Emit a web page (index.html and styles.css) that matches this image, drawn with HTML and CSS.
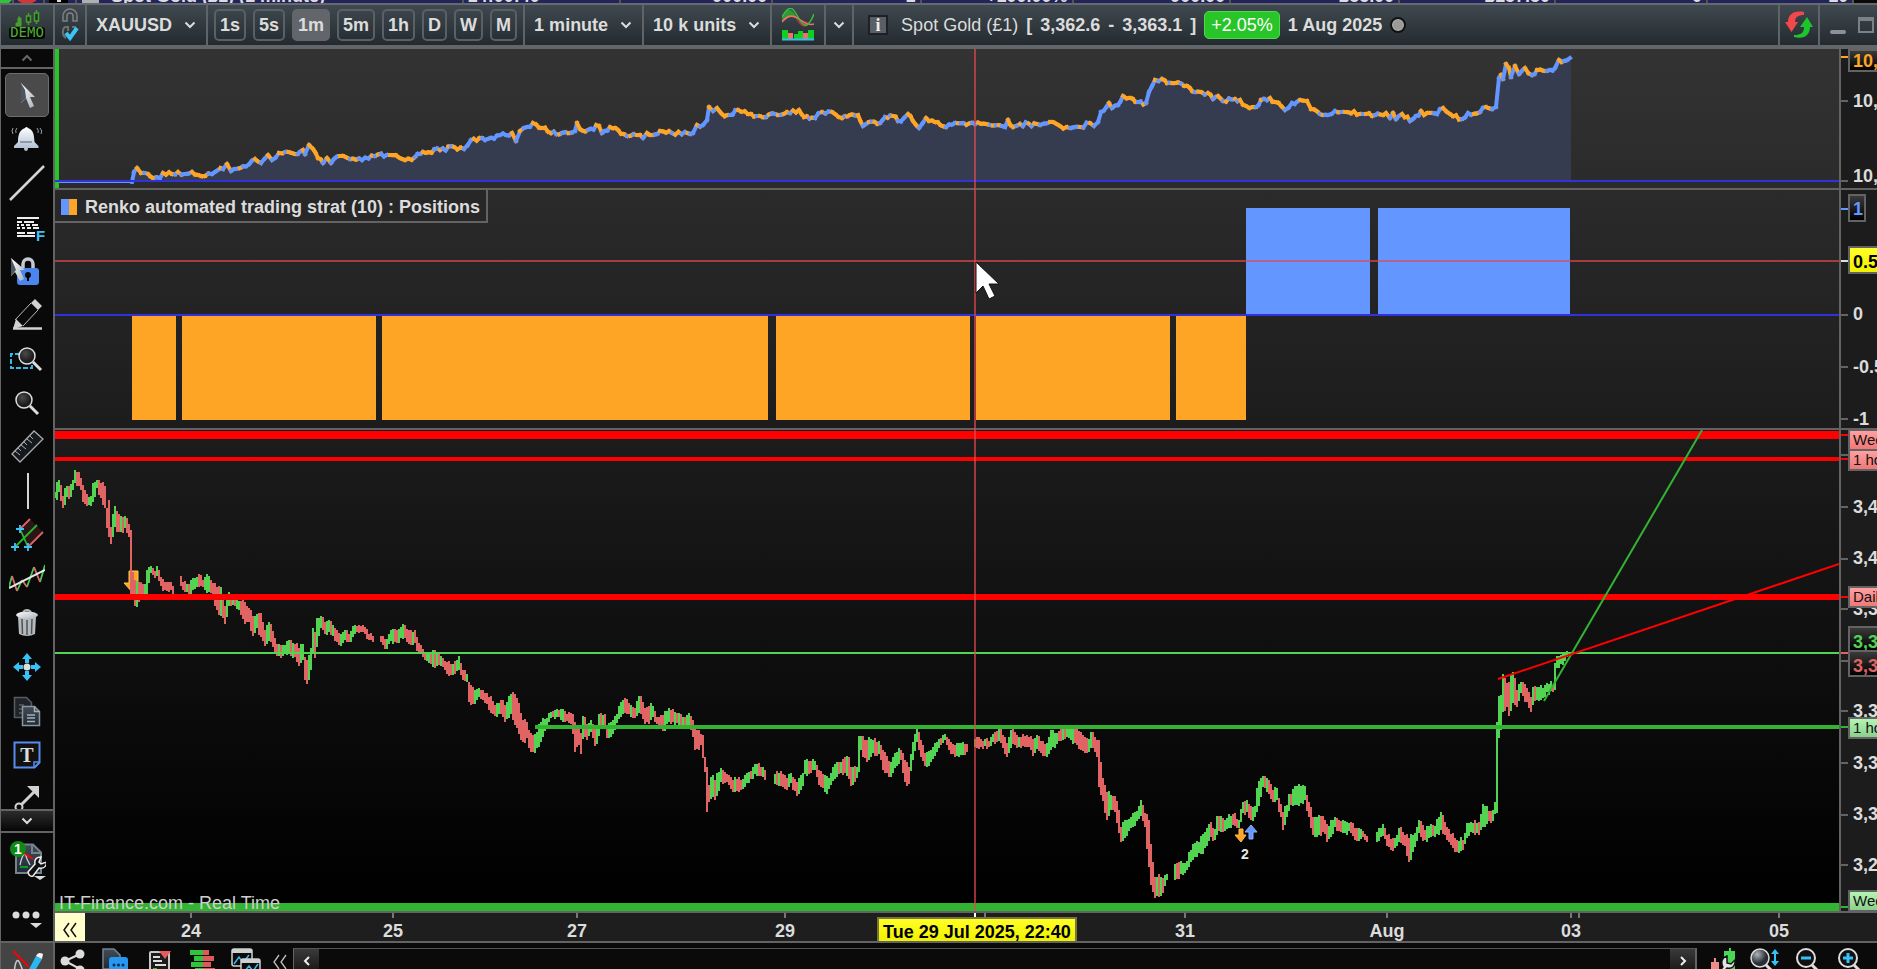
FILE: index.html
```html
<!DOCTYPE html>
<html lang="en">
<head>
    <meta charset="UTF-8">
    <meta name="viewport" content="width=device-width, initial-scale=1.0">
    <title>XAUUSD - 1 minute</title>
    <link rel="stylesheet" href="styles.css">
</head>
<body>
    <svg class="defs" width="0" height="0" aria-hidden="true">
        <defs>
            <linearGradient id="silver" x1="0" y1="0" x2="1" y2="1"><stop offset="0" stop-color="#fff"/><stop offset="1" stop-color="#a9b2bd"/></linearGradient>
            <linearGradient id="bellFill" x1="0" y1="0" x2="0" y2="1"><stop offset="0" stop-color="#fff"/><stop offset="1" stop-color="#a8bad0"/></linearGradient>
            <linearGradient id="slate" x1="0" y1="0" x2="0" y2="1"><stop offset="0" stop-color="#414c58"/><stop offset="1" stop-color="#202a34"/></linearGradient>
            <radialGradient id="lens" cx=".4" cy=".35"><stop offset="0" stop-color="#4a4a4a"/><stop offset="1" stop-color="#1c1c1c"/></radialGradient>
            <radialGradient id="ball" cx=".35" cy=".3"><stop offset="0" stop-color="#aeb4bb"/><stop offset="1" stop-color="#272d33"/></radialGradient>
        </defs>
    </svg>

    <div class="orders">
        <span class="order name">
            <svg width="107" height="3" viewBox="0 0 107 3"><path d="M0 0h12l-3 3H0z" fill="#2fc53a"/><path d="M18 0h18v1l-4 2H22l-4-2z" fill="#d83438"/><path d="M49 0h19v3H49z" fill="#000"/><path d="M57 0h4v2h-4z" fill="#ddd"/><path d="M82 0h17v3H82z" fill="#aab0b6"/><path d="M12 0h2v3h-2zM43 0h2v3h-2zM75 0h2v3h-2z" fill="#55554c"/></svg>
            Spot Gold (£1) (1 minute)
        </span>
        <span class="order time">14:00:40</span>
        <span class="order c1">900.00</span>
        <span class="order c2">1</span>
        <span class="order c3">+100.00%</span>
        <span class="order c4">900.00</span>
        <span class="order c5">£55.00</span>
        <span class="order c6">£157.50</span>
        <span class="order c7">0</span>
        <span class="order c8">10</span>
        <span class="orders-end"></span>
    </div>

    <header class="toolbar">
        <div class="seg demo">
            <svg width="40" height="32" viewBox="0 0 40 32">
                <g stroke="#46a02c" fill="#46a02c" stroke-width="1">
                    <path d="M12 7v10M11 9h3v6h-3z"/>
                    <path d="M9 14h5v3H9z"/>
                    <path d="M21.500 4v12M29.500 1v14" stroke-width="1.500"/>
                    <path d="M19.500 7h4v6h-4zM27.500 4h4v8h-4z" fill="#1d3320" stroke-width="1.500"/>
                </g>
                <rect x="2" y="18" width="36" height="12" rx="3" fill="#050505"/>
                <text x="20" y="28" class="demo-text" text-anchor="middle">DEMO</text>
            </svg>
        </div>
        <button class="seg link" aria-label="Link windows">
            <svg width="20" height="34" viewBox="0 0 20 34" fill="none">
                <path d="M6 13H3V8a7 7 0 0 1 14 0v5h-4V8a3 3 0 0 0-6 0v5z" fill="#3c4347" stroke="#7c8184" stroke-width="1.500"/>
                <path d="M6 30c-4-2-4-9-1-11h3v4M12 19h3v4" stroke="#6b7073" stroke-width="2"/>
                <path d="M6 25l4 5 7-10" stroke="#3cc4f8" stroke-width="4"/>
            </svg>
        </button>
        <label class="seg pick">
            <select aria-label="Instrument"><option>XAUUSD</option></select>
            <svg class="chev" viewBox="0 0 12 8"><path d="M1.500 1.500L6 6l4.500-4.500"/></svg>
        </label>
        <div class="seg frames">
            <button>1s</button>
            <button>5s</button>
            <button class="active">1m</button>
            <button>5m</button>
            <button>1h</button>
            <button>D</button>
            <button>W</button>
            <button>M</button>
        </div>
        <label class="seg pick">
            <select aria-label="Timeframe"><option>1 minute</option></select>
            <svg class="chev" viewBox="0 0 12 8"><path d="M1.500 1.500L6 6l4.500-4.500"/></svg>
        </label>
        <label class="seg pick">
            <select aria-label="History"><option>10 k units</option></select>
            <svg class="chev" viewBox="0 0 12 8"><path d="M1.500 1.500L6 6l4.500-4.500"/></svg>
        </label>
        <button class="seg indicators" aria-label="Indicators">
            <svg width="32" height="34" viewBox="0 0 32 34">
                <path d="M0 10C5-2 9 0 14 8Q4 7 0 14z" fill="#2f9a35"/>
                <path d="M13 9q7 3 15 6-7 10-15-6z" fill="#a5393c"/>
                <path d="M0 14Q8 4 17 11t15 5" fill="none" stroke="#f0706c" stroke-width="1.500"/>
                <path d="M0 9C8-5 11 0 16 9s9 14 16-3" fill="none" stroke="#38c03c" stroke-width="1.500"/>
                <path d="M0 22h6v9H0zM12 26h4v5h-4zM16 23h5v8h-5zM26 22h6v9h-6z" fill="#0fd01e"/>
                <path d="M6 25h5v6H6zM21 25h5v6h-5z" fill="#f0706c"/>
                <path d="M0 31.500h32" stroke="#35bdf0" stroke-width="2"/>
            </svg>
        </button>
        <button class="seg more" aria-label="More indicators">
            <svg class="chev" viewBox="0 0 12 8"><path d="M1.500 1.500L6 6l4.500-4.500"/></svg>
        </button>
        <div class="quote">
            <span class="info">i</span>
            <span>Spot Gold (£1)</span>
            <strong class="prices"><span>[</span><span>3,362.6</span><span>-</span><span>3,363.1</span><span>]</span></strong>
            <span class="change">+2.05%</span>
            <strong>1 Aug 2025</strong>
            <span class="dot"></span>
        </div>
        <button class="seg swap" aria-label="Refresh">
            <svg width="28" height="28" viewBox="0 0 28 28">
                <path d="M19 1C8-1 3 4 3 11H0l6.500 10L13 11h-3c0-5 3-7 9-7z" fill="#f2484c"/>
                <path d="M9 26c11 3 16-3 16-10h3L22 6l-7 10h4c0 6-3 8-10 8z" fill="#1cc52c"/>
            </svg>
        </button>
        <div class="window">
            <button aria-label="Minimise"><i class="min"></i></button>
            <button aria-label="Maximise"><i class="max"></i></button>
        </div>
    </header>

    <main class="workspace">
        <nav class="sidebar" aria-label="Drawing tools">
            <button class="scroll up" aria-label="Scroll up"><svg class="chev" viewBox="0 0 12 8"><path d="M1.500 6.500L6 2l4.500 4.500"/></svg></button>
            <div class="tools">
                <button class="tool active" aria-label="Pointer"><svg viewBox="0 0 36 36"><path d="M12 6v20l5-5 4 10 4-2-4-9h5z" fill="url(#silver)"/><path d="M12 6v20l5-5-1-8z" fill="#4a5560"/></svg></button>
                <button class="tool" aria-label="Alerts"><svg viewBox="0 0 36 36"><path d="M16 7q1.500-2 3 0c6 2 6 8 6.500 14l4 4v2H5v-2l4-4c0-6 1-12 7-14zM15 27h4q0 3-2 3t-2-3z" fill="url(#bellFill)"/><path d="M11 21h12" stroke="#55606e"/><path d="M4 7q-2 3 0 6M8 7q-2 2-1 5M28 7q2 2 1 5M31 7q3 3 1 6" fill="none" stroke="#93a0ac"/></svg></button>
                <button class="tool" aria-label="Line"><svg viewBox="0 0 36 36"><path d="M1 35L35 1" stroke="#d5d5d5" stroke-width="2.500"/></svg></button>
                <button class="tool" aria-label="Fibonacci"><svg viewBox="0 0 36 36"><path d="M8 9h22M8 13h5m2 0h10M8 16h2m2 0h3m2 0h4m2 0h6M8 19h3m2 0h3m2 0h4m2 0h6M8 24h8m2 0h8M8 27h18" stroke="#eee" stroke-width="1.800"/><text x="27" y="32" class="fib">F</text></svg></button>
                <button class="tool" aria-label="Lock"><svg viewBox="0 0 36 36"><path d="M14 17v-6a5 5 0 0 1 10 0v6" fill="none" stroke="#c6cad0" stroke-width="3.500"/><rect x="8" y="15" width="22" height="17" rx="3" fill="#4a86ee"/><circle cx="19" cy="22" r="3" fill="#0a0a0a"/><path d="M18 23h2v5h-2z"/><path d="M2 5v18l4-4 5 9 4-2-4-9h5z" fill="url(#silver)"/><path d="M2 5v18l5-6z" fill="#4a5560"/></svg></button>
                <button class="tool" aria-label="Draw"><svg viewBox="0 0 36 36"><path d="M26 2l7 7-4 4-7-7zM4 32l3-10 7 7z" fill="#d2d2d2"/><path d="M22 6L6 23M29 13L14 29" stroke="#bbb"/><path d="M4 31.500h29" stroke="#d2d2d2" stroke-width="2.500"/></svg></button>
                <button class="tool" aria-label="Zoom selection"><svg viewBox="0 0 36 36"><path d="M11 13H2v14h21v-4" fill="none" stroke="#35b9ea" stroke-width="2" stroke-dasharray="5 2"/><circle cx="18" cy="15" r="8" fill="url(#lens)" stroke="#ddd" stroke-width="1.500"/><path d="M24 21l8 8" stroke="#ddd" stroke-width="3"/></svg></button>
                <button class="tool" aria-label="Zoom"><svg viewBox="0 0 36 36"><circle cx="15" cy="15" r="8" fill="url(#lens)" stroke="#ddd" stroke-width="1.500"/><path d="M21 21l8 8" stroke="#ddd" stroke-width="3"/></svg></button>
                <button class="tool" aria-label="Ruler"><svg viewBox="0 0 36 36"><path d="M3 25L25 2l9 8-23 23z" fill="#15181d" stroke="#aaa" stroke-width="1.300"/><path d="M6 22l5 4M9 19l3 3M12 16l5 4M15 13l3 3M18 10l5 4M21 7l3 3" stroke="#aaa"/></svg></button>
                <button class="tool" aria-label="Vertical line"><svg viewBox="0 0 36 36"><path d="M19 0v36" stroke="#d5d5d5" stroke-width="2"/></svg></button>
                <button class="tool" aria-label="Pitchfork"><svg viewBox="0 0 36 36"><path d="M11 12L21 2l13 13-15 15z" fill="#2a1517"/><path d="M11 12L21 2M19 30l15-15" stroke="#e06064" stroke-width="1.800"/><path d="M6 30L28 8M11 12l8 18" stroke="#28b42e" stroke-width="1.800"/><path d="M11 8v8M7 12h8M6 26v8M2 30h8M19 26v8M15 30h8" stroke="#3cc4f8" stroke-width="1.800"/></svg></button>
                <button class="tool" aria-label="Regression"><svg viewBox="0 0 36 36"><g fill="none" stroke-width="1.800"><path d="M0 26l3-11M8 30l5-11M18 26l7-20M31 21l5-17" stroke="#4cc652"/><path d="M3 15l5 15M13 19l5 7M25 6l6 15" stroke="#e06a6a"/><path d="M0 27L36 9" stroke="#e8e8e8" stroke-width="2"/></g></svg></button>
                <button class="tool" aria-label="Delete"><svg viewBox="0 0 36 36"><path d="M9 12h18l-1 17q-8 4-16 0z" fill="#b4b9be"/><ellipse cx="18" cy="10" rx="11" ry="3.500" fill="url(#silver)"/><path d="M14 7q4-4 8 0" fill="none" stroke="#bbb" stroke-width="2"/><path d="M13 14l.500 15M18 15v15M23 14l-.500 15" stroke="#4d5358" stroke-width="1.500"/></svg></button>
                <button class="tool" aria-label="Move"><svg viewBox="0 0 36 36" fill="#35c2f8"><path d="M18 4l5 6h-3v4h-4v-4h-3zM18 32l5-6h-3v-4h-4v4h-3zM4 18l6-5v3h4v4h-4v3zM32 18l-6-5v3h-4v4h4v3z"/><circle cx="18" cy="18" r="3.500" fill="#ddd"/></svg></button>
                <button class="tool" aria-label="Copy"><svg viewBox="0 0 36 36" stroke-width="1.500"><path d="M5.500 4.500h12l5 5v15h-17z" fill="#20252b" stroke="#565c62"/><path d="M10 12h5M10 16h4M10 20h4" stroke="#565c62"/><path d="M13.500 13.500h12l5 5v14h-17z" fill="url(#slate)" stroke="#8b959e"/><path d="M25.500 13.500v5h5M18 22h8M18 25h8M18 28.500h8" fill="none" stroke="#a5afb8"/></svg></button>
                <button class="tool" aria-label="Text"><svg viewBox="0 0 36 36"><path d="M5.500 5.500h25v20l-5 5h-20z" fill="#111" stroke="#5a8cf0" stroke-width="2"/><path d="M25 30.500V25h5.500" fill="none" stroke="#5a8cf0" stroke-width="1.500"/><text x="18" y="25" text-anchor="middle" class="serif-t">T</text></svg></button>
                <button class="tool" aria-label="Arrow"><svg viewBox="0 0 36 36"><path d="M12 24L26 10" stroke="#d2d2d2" stroke-width="3"/><path d="M18 5h12v12z" fill="#d2d2d2"/><circle cx="10" cy="26" r="3.500" fill="none" stroke="#d2d2d2" stroke-width="2"/></svg></button>
            </div>
            <button class="scroll down" aria-label="Scroll down"><svg class="chev" viewBox="0 0 12 8"><path d="M1.500 1.500L6 6l4.500-4.500"/></svg></button>
            <div class="extras">
                <button aria-label="Manage drawings"><svg width="38" height="42" viewBox="0 0 38 42">
                    <path d="M8 5.500h17l8 8V34H8z" fill="url(#slate)" stroke="#76828c" stroke-width="2"/>
                    <path d="M24 5v9h9" fill="none" stroke="#76828c" stroke-width="2"/>
                    <path d="M12 26q4-18 7-6l3 6" fill="none" stroke="#c8ccd0" stroke-width="1.300"/>
                    <path d="M16 14l9 6" stroke="#f00" stroke-width="2"/><path d="M12 28h8" stroke="#0a9a2c" stroke-width="2"/>
                    <path d="M20 33l7-8c-1-5 2-7 6-7l-2 5 2 2 6-2c-1 5-3 7-8 6l-6 8q-4 1-5-4z" fill="#111" stroke="#eee" stroke-width="1.500"/>
                    <path d="M26 37h12l-6 4z" fill="#ddd"/>
                    <circle cx="10" cy="10" r="8" fill="#0f8a14"/><text x="10" y="15" text-anchor="middle" class="count">1</text>
                </svg></button>
                <button aria-label="More tools"><svg width="38" height="22" viewBox="0 0 38 22" fill="#dcdcdc"><circle cx="8" cy="5" r="3.500"/><circle cx="18" cy="5" r="3.500"/><circle cx="28" cy="5" r="3.500"/><path d="M22 13h12l-6 5z"/></svg></button>
            </div>
        </nav>

        <section class="charts">
            <div class="panel equity">
                <svg class="plot" id="equity" viewBox="55 49 1784 139" preserveAspectRatio="none"></svg>
                <div class="scale" id="equityScale"></div>
            </div>
            <div class="panel positions">
                <svg class="plot" id="positions" viewBox="55 190 1784 238" preserveAspectRatio="none"></svg>
                <div class="scale" id="positionsScale"></div>
                <div class="legend"><i></i>Renko automated trading strat (10) : Positions</div>
            </div>
            <div class="panel price">
                <svg class="plot" id="price" viewBox="55 430 1784 481" preserveAspectRatio="none"></svg>
                <div class="scale" id="priceScale"></div>
                <span class="source">IT-Finance.com - Real Time</span>
            </div>
            <div class="times">
                <div class="time-scale" id="timeScale"></div>
                <button class="rewind" aria-label="Back"><svg width="16" height="16" viewBox="0 0 16 16"><path d="M7 1L2 8l5 7M14 1L9 8l5 7"/></svg></button>
                <span class="when">Tue 29 Jul 2025, 22:40</span>
            </div>
            <div class="cross"></div>
            <svg class="mouse" width="24" height="40" viewBox="0 0 24 40"><path d="M1 1v31l7-7 6 13 6-3-6-12h10z" fill="#fff" stroke="#111"/></svg>
        </section>
    </main>

    <footer class="bottom">
        <button class="pen" aria-label="Drawing mode"><svg width="34" height="26" viewBox="0 0 34 26"><path d="M4 26q2-22 7-8l3 8" fill="none" stroke="#c8ccd0" stroke-width="1.500"/><path d="M3 3l16 16" stroke="#f00" stroke-width="2"/><path d="M17 25L26 8l6 3-9 15h-7z" fill="#2ab8f0"/><path d="M26 8q2-5 7-2l-1 5z" fill="#f4f4f4"/></svg></button>
        <button class="share" aria-label="Share"><svg width="26" height="24" viewBox="0 0 26 24" fill="#dcdcdc"><path d="M5 13L20 6M5 13l15 8" stroke="#dcdcdc" stroke-width="2"/><circle cx="20" cy="6" r="4.500"/><circle cx="5" cy="13" r="4.500"/><circle cx="20" cy="22" r="4.500"/></svg></button>
        <button class="chat" aria-label="Chat"><svg width="28" height="24" viewBox="0 0 28 24"><path d="M2 1h11l6 6v14H2z" fill="url(#slate)" stroke="#76828c" stroke-width="1.500"/><rect x="8" y="9" width="19" height="20" rx="3" fill="#2698f4"/><g fill="#0c2c4c"><circle cx="13" cy="17" r="1.500"/><circle cx="17.500" cy="17" r="1.500"/><circle cx="22" cy="17" r="1.500"/></g></svg></button>
        <button aria-label="Reports"><svg width="24" height="24" viewBox="0 0 24 24"><path d="M2 26V5q0-1 1-1h18v22" fill="#1c1c1c" stroke="#c8c8c8" stroke-width="2"/><path d="M11 3h12l-6 8z" fill="#e85a5e"/><path d="M5 9h7M5 13h9M7 17h11" stroke="#ddd" stroke-width="2"/><path d="M5 21h4" stroke="#0fd01e" stroke-width="2"/></svg></button>
        <button class="book" aria-label="Order book"><svg width="28" height="24" viewBox="0 0 28 24"><path d="M1 2h13v5H1zM5 8h9v5H5zM2 14h12v5H2zM6 20h8v5H6z" fill="#2fc53a"/><path d="M14 2h6v5h-6zM14 8h11v5H14zM14 14h8v5h-8zM14 20h12v5H14z" fill="#e0585c"/></svg></button>
        <button aria-label="Windows"><svg width="32" height="24" viewBox="0 0 32 24"><g fill="#0a0a0a" stroke="#d0d0d0" stroke-width="1.500"><rect x="2" y="1" width="20" height="17" rx="2"/><path d="M2 3h20" stroke-width="4"/></g><path d="M4 16l5-7 4 6 6-8" fill="none" stroke="#35bdf0" stroke-width="1.500"/><rect x="11" y="11" width="19" height="18" rx="2" fill="#0a0a0a" stroke="#d0d0d0" stroke-width="1.500"/><path d="M11 13h19" stroke="#d0d0d0" stroke-width="4"/><path d="M14 24l5-6 4 5 5-7" fill="none" stroke="#35bdf0" stroke-width="1.500"/></svg></button>
        <button class="back" aria-label="Collapse"><svg width="16" height="16" viewBox="0 0 16 16"><path d="M7 1L2 8l5 7M14 1L9 8l5 7" fill="none" stroke="#c0c0c0" stroke-width="1.300"/></svg></button>
        <div class="scrollbar">
            <button aria-label="Scroll left"><svg width="8" height="12" viewBox="0 0 8 12"><path d="M6 2L2 6l4 4"/></svg></button>
            <button aria-label="Scroll right"><svg width="8" height="12" viewBox="0 0 8 12"><path d="M2 2l4 4-4 4"/></svg></button>
        </div>
        <div class="zooms">
            <button aria-label="Chart settings"><svg width="28" height="24" viewBox="0 0 28 24"><path d="M2 14h8v12H2zM5 10h2v4H5z" fill="#f08a8a"/><path d="M15 3h11v20H15zM20 0h2v4h-2z" fill="#4cd655"/><path d="M7 27l7-8c-3-6 0-10 4-11v7l4 1 4-4c1 7-4 9-8 8l-7 8" fill="#e4e4e4" stroke="#111" stroke-width="1.500"/></svg></button>
            <button aria-label="Fit height"><svg width="32" height="24" viewBox="0 0 32 24"><circle cx="11" cy="10" r="9" fill="url(#ball)" stroke="#ddd" stroke-width="1.500"/><path d="M17 17l7 7" stroke="#ddd" stroke-width="3"/><path d="M26 1l4 5h-3v7h3l-4 5-4-5h3V6h-3z" fill="#35c2f8"/></svg></button>
            <button aria-label="Zoom out"><svg width="24" height="24" viewBox="0 0 24 24"><circle cx="11" cy="10" r="9" fill="#111" stroke="#ddd" stroke-width="2"/><path d="M17 17l7 7" stroke="#ddd" stroke-width="3"/><path d="M6 10h10" stroke="#35c2f8" stroke-width="3"/></svg></button>
            <button aria-label="Zoom in"><svg width="24" height="24" viewBox="0 0 24 24"><circle cx="11" cy="10" r="9" fill="#111" stroke="#ddd" stroke-width="2"/><path d="M17 17l7 7" stroke="#ddd" stroke-width="3"/><path d="M6 10h10M11 5v10" stroke="#35c2f8" stroke-width="3"/></svg></button>
        </div>
    </footer>

    <script src="script.js"></script>
</body>
</html>
```
FILE: styles.css
```css
* {
box-sizing: border-box;
}

body {
margin: 0;
height: 100vh;
display: flex;
flex-direction: column;
overflow: hidden;
background-color: #0a0a0a;
color: #dcdcdc;
font-family: "Liberation Sans", Arial, sans-serif;
font-size: 18px;
line-height: 20px;
}

button, select {
background: none;
border: none;
border-radius: 0;
color: inherit;
font: inherit;
margin: 0;
padding: 0;
cursor: pointer;
}

svg {
display: block;
flex: none;
}

.defs {
position: absolute;
}

.chev {
width: 12px;
height: 8px;
fill: none;
stroke: #dcdcdc;
stroke-width: 2;
}

/* orders list, only its last pixels show above the chart window */
.orders {
display: flex;
align-items: flex-end;
flex: none;
height: 3px;
overflow: hidden;
background-color: #24245c;
font-weight: bold;
line-height: 14px;
}

.order {
flex: none;
border-right: 2px solid #55554c;
padding: 0 4px;
text-align: right;
white-space: nowrap;
}

.name {
display: flex;
align-items: flex-end;
gap: 4px;
width: 24.7%;
padding-left: 0;
}

.time { width: 8.4%; text-align: left; }
.c1 { width: 8.1%; }
.c2 { width: 7.9%; }
.c3 { width: 8.1%; }
.c4 { width: 8.4%; }
.c5 { width: 9%; }
.c6 { width: 8.3%; }
.c7 { width: 8.1%; }
.c8 { width: 7.8%; }

.orders-end {
flex: 1;
height: 3px;
background-color: #0a0a0a;
}

.toolbar {
display: flex;
flex: none;
height: 46px;
border-top: 2px solid #666a6d;
border-bottom: 4px solid #636668;
border-left: 1px solid #666a6d;
background: linear-gradient(#40494f, #232b30);
}

.seg {
display: flex;
align-items: center;
justify-content: center;
flex: none;
border-right: 2px solid #5f6467;
}

.demo {
width: 54px;
}

.demo-text {
fill: #4fae30;
font-family: "DejaVu Sans Mono", monospace;
font-size: 14px;
}

.link {
width: 32px;
}

.pick {
gap: 11px;
padding: 0 10px 0 9px;
font-weight: bold;
}

.pick select {
appearance: none;
outline: none;
}

.frames {
gap: 7px;
padding: 0 6px;
font-weight: bold;
}

.frames button {
height: 32px;
border: 2px solid #596066;
border-radius: 5px;
padding: 0 4px;
}

.frames .active {
background-color: #62666a;
border-color: #62666a;
}

.indicators {
width: 54px;
}

.more {
width: 28px;
}

.quote {
display: flex;
align-items: center;
flex: 1;
gap: 8px;
padding-left: 14px;
white-space: nowrap;
}

.info {
width: 20px;
height: 20px;
margin-right: 5px;
border: 2px solid #1d2024;
background-color: #5a5e66;
color: #eee;
font-family: "Liberation Serif", serif;
font-weight: bold;
line-height: 16px;
text-align: center;
}

.prices {
display: flex;
gap: 8px;
}

.change {
padding: 3px 6px;
border: 1px solid #4fd84f;
border-radius: 5px;
background-color: #27c527;
color: #fff;
}

.dot {
width: 16px;
height: 16px;
border: 2px solid #111;
border-radius: 50%;
background-color: #9a9a9a;
box-shadow: inset 0 0 0 1px #b5b5b5;
}

.swap {
width: 42px;
border-left: 2px solid #5f6467;
}

.window {
display: flex;
flex: 0 0 57px;
align-items: center;
gap: 12px;
padding-left: 10px;
}

.window i {
display: block;
width: 16px;
}

.min {
height: 4px;
margin-top: 14px;
border-radius: 2px;
background-color: #8b9196;
}

.max {
height: 16px;
border: 2px solid #7b8186;
border-top-width: 4px;
}

.workspace {
display: flex;
flex: 1;
min-height: 0;
}

/* left tools */
.sidebar {
display: flex;
flex-direction: column;
flex: 0 0 55px;
border-left: 1px solid #666;
border-right: 2px solid #636363;
background-color: #090909;
}

.sidebar button {
display: flex;
align-items: center;
justify-content: center;
}

.scroll {
flex: none;
}

.up {
height: 20px;
border-bottom: 2px solid #636363;
}

.up .chev {
opacity: .45;
}

.down {
height: 24px;
border-top: 2px solid #636363;
border-bottom: 2px solid #636363;
background: linear-gradient(#2c2c2c, #050505);
}

.tools {
display: flex;
flex-direction: column;
align-items: center;
flex: 1;
min-height: 0;
overflow: hidden;
padding-top: 4px;
}

.tool {
flex: none;
width: 44px;
height: 44px;
}

.tool svg {
width: 36px;
height: 36px;
}

.sidebar .tool.active {
border: 1px solid #6e6e6e;
border-radius: 5px;
background-color: #4a4a4a;
}

.fib {
fill: #3cc4f8;
font-size: 15px;
font-weight: bold;
}

.serif-t {
fill: #dcdcdc;
font-family: "Liberation Serif", serif;
font-size: 20px;
font-weight: bold;
}

.count {
fill: #fff;
font-size: 14px;
font-weight: bold;
}

.extras {
display: flex;
flex-direction: column;
align-items: center;
flex: 0 0 108px;
gap: 29px;
padding-top: 6px;
}

/* charts */
.charts {
position: relative;
display: flex;
flex-direction: column;
flex: 1;
min-width: 0;
background: linear-gradient(#333, #000 95%);
}

.panel {
position: relative;
display: flex;
min-height: 0;
border-bottom: 2px solid #636363;
box-sizing: content-box;
}

.equity { flex: 139 1 0; }
.positions { flex: 238 1 0; }
.price { flex: 481 1 0; }

.plot {
flex: 1;
min-width: 0;
width: 100%;
height: 100%;
}

.scale {
position: relative;
flex: 0 0 38px;
overflow: hidden;
border-left: 2px solid #636363;
background-color: #1c1c1c;
font-weight: bold;
}

.tick {
position: absolute;
left: 0;
width: 7px;
height: 2px;
margin-top: -1px;
background-color: #636363;
}

.mark {
position: absolute;
left: 12px;
margin-top: -10px;
white-space: nowrap;
}

.tag {
position: absolute;
left: 7px;
display: flex;
align-items: center;
min-width: 18px;
border: 2px solid #636363;
padding-left: 3px;
background: linear-gradient(#3a3a3a, #000);
white-space: nowrap;
}

.wide { width: 60px; }
.up-tag { color: #52d452; padding-top: 5px; }
.down-tag { color: #e06464; padding-top: 5px; }
.gold { color: #ffa526; }

.sky {
color: #6496ff;
padding-top: 3px;
}

.yellow {
padding-top: 3px;
background: linear-gradient(#ffff28, #f0f000);
color: #000;
}

.pink, .mint {
color: #111;
font-size: 15px;
font-weight: normal;
}

.pink { background: linear-gradient(#ffa0a0, #f07878); }
.mint { background: linear-gradient(#b4f5b4, #8ccf8c); }

.legend {
position: absolute;
left: 0;
top: 0;
display: flex;
align-items: center;
gap: 8px;
height: 33px;
border-right: 2px solid #636363;
border-bottom: 2px solid #636363;
padding: 2px 6px 0;
background-color: #272727;
font-weight: bold;
white-space: nowrap;
}

.legend i {
width: 16px;
height: 16px;
background: linear-gradient(90deg, #6496ff 50%, #ffa526 50%);
}

.source {
position: absolute;
left: 4px;
bottom: -2px;
color: #cfcfcf;
}

.order-count {
fill: #e8e8e8;
font-size: 14px;
font-weight: bold;
}

.times {
position: relative;
flex: 0 0 28px;
padding-right: 38px;
background-color: #1e1e1e;
font-weight: bold;
}

.time-scale {
position: relative;
height: 28px;
}

.notch {
position: absolute;
top: 0;
width: 2px;
height: 5px;
margin-left: -1px;
background-color: #777;
}

.bright {
background-color: #fff;
}

.day {
position: absolute;
top: 8px;
width: 60px;
margin-left: -30px;
text-align: center;
}

.rewind {
position: absolute;
left: 0;
top: 0;
display: flex;
align-items: center;
justify-content: center;
width: 30px;
height: 28px;
padding-top: 6px;
background-color: #ffffcc;
}

.rewind path {
fill: none;
stroke: #111;
stroke-width: 1.5;
}

.when {
position: absolute;
left: 822px;
top: 4px;
height: 24px;
border: 2px solid #77773c;
border-bottom: none;
padding: 3px 4px 0;
background: linear-gradient(#ffff28, #f0f000);
color: #000;
white-space: nowrap;
}

.cross {
position: absolute;
left: 919px;
top: 0;
bottom: 30px;
width: 2px;
background-color: rgba(225, 72, 76, .68);
}

.mouse {
position: absolute;
left: 920px;
top: 212px;
}

/* bottom bar */
.bottom {
display: flex;
flex: none;
height: 28px;
overflow: hidden;
border-top: 2px solid #636363;
border-left: 1px solid #636363;
background-color: #0a0a0a;
}

.bottom > button, .zooms button {
display: flex;
justify-content: center;
flex: none;
width: 42px;
padding-top: 5px;
}

.bottom > .pen {
width: 54px;
border-right: 2px solid #636363;
background-color: #444;
}

.bottom > .share {
width: 36px;
}

.bottom > .chat {
width: 48px;
}

.bottom > .book {
width: 44px;
}

.bottom > .back {
width: 26px;
padding-top: 11px;
}

.scrollbar {
display: flex;
justify-content: space-between;
flex: 1;
margin-top: 5px;
border-top: 1px solid #555;
border-left: 1px solid #636363;
border-right: 2px solid #636363;
}

.scrollbar button {
display: flex;
justify-content: center;
width: 25px;
padding-top: 6px;
background: linear-gradient(#3a3a3a, #1c1c1c);
}

.scrollbar path {
fill: none;
stroke: #eee;
stroke-width: 2;
}

.zooms {
display: flex;
flex: 0 0 180px;
padding-left: 5px;
}

/* charts drawn by script.js are clipped to their own panel */
.plot {
overflow: hidden;
}
```
FILE: script.js
```js
const SVG = 'http://www.w3.org/2000/svg';
const GREEN = '#52d452', RED = '#e06464', BLUE = '#6496ff', ORANGE = '#ffa526';

function add(parent, name, attrs, text) {
    const el = document.createElementNS(SVG, name);
    for (const key in attrs) el.setAttribute(key, attrs[key]);
    if (text) el.textContent = text;
    parent.appendChild(el);
    return el;
}

// same sequence on each load
function noise(n) {
    const v = Math.sin(n * 12.9898) * 43758.5453;
    return v - Math.floor(v);
}

function line(svg, x1, y1, x2, y2, color, width) {
    add(svg, 'line', { x1, y1, x2, y2, stroke: color, 'stroke-width': width });
}

// equity curve
const equityPoints = [
    132,182, 134,172, 137,168, 141,173, 148,174, 153,178, 160,178, 163,173, 172,174, 178,172, 185,174, 192,172, 198,175, 205,176,
    212,174, 218,170, 223,169, 227,164, 231,171, 240,168, 255,159, 261,163, 268,155, 272,160, 279,153, 295,154, 303,150, 305,154,
    309,145, 313,149, 318,158, 323,163, 327,158, 331,163, 340,156, 350,159, 362,160, 375,156, 390,155, 405,160, 415,157, 423,152,
    440,150, 454,147, 464,149, 471,140, 485,140, 500,135, 512,133, 516,141, 520,131, 527,127, 533,123, 542,128, 551,133, 562,133,
    575,131, 577,123, 580,129, 588,130, 599,126, 602,133, 610,127, 618,130, 627,136, 640,135, 643,138, 647,133, 652,135, 660,131,
    672,133, 685,132, 693,133, 697,125, 703,125, 707,120, 709,107, 713,111, 717,108, 722,114, 730,115, 738,110, 748,114, 760,116,
    775,114, 790,113, 799,110, 804,117, 815,118, 822,112, 832,112, 842,118, 850,115, 858,115, 863,126, 869,122, 880,123, 885,117,
    893,116, 898,121, 904,118, 908,114, 913,121, 919,128, 926,118, 935,122, 946,127, 955,123, 975,124, 990,125, 1005,127, 1008,120,
    1013,127, 1020,124, 1040,125, 1050,122, 1060,126, 1070,128, 1080,127, 1090,123, 1094,126, 1098,122, 1101,112, 1109,103, 1112,108,
    1118,105, 1123,96, 1130,98, 1138,102, 1146,103, 1149,92, 1155,80, 1162,79, 1167,83, 1175,83, 1187,86, 1195,92, 1208,93, 1213,99,
    1218,96, 1223,101, 1235,99, 1240,100, 1246,106, 1256,107, 1261,100, 1270,98, 1275,102, 1285,110, 1292,103, 1300,100, 1307,101,
    1311,109, 1320,114, 1328,115, 1335,111, 1345,112, 1360,114, 1375,115, 1386,113, 1390,118, 1393,113, 1396,119, 1402,114, 1410,121,
    1416,116, 1421,111, 1424,115, 1437,114, 1443,108, 1450,114, 1462,119, 1468,113, 1480,112, 1486,107, 1492,109, 1496,107, 1499,78,
    1501,75, 1503,79, 1506,64, 1509,68, 1511,77, 1515,66, 1519,74, 1525,68, 1532,75, 1537,70, 1550,70, 1555,68, 1559,60, 1564,61, 1570,58
];

function drawEquity() {
    const svg = document.getElementById('equity');
    const p = equityPoints;
    add(svg, 'polygon', { points: '132,181 ' + p.join(' ') + ' 1571,58 1571,181', fill: '#363c50' });
    line(svg, 57, 49, 57, 188, '#27c527', 4);
    line(svg, 59, 182, 132, 182, BLUE, 2);
    let px = p[0], py = p[1], n = 0;
    for (let i = 2; i < p.length; i += 2) {
        // split long segments so that flat parts mix both colours
        const steps = Math.max(1, Math.round((p[i] - p[i - 2]) / 3));
        const slope = (p[i + 1] - p[i - 1]) / (p[i] - p[i - 2]);
        for (let s = 1; s <= steps; s++) {
            n++;
            const x = p[i - 2] + (p[i] - p[i - 2]) * s / steps;
            let y = p[i - 1] + (p[i + 1] - p[i - 1]) * s / steps;
            if (s < steps) y += (noise(n) - .5) * 4;
            const falling = slope + (noise(n + 500) - .4) * 1.1 > 0;
            add(svg, 'line', { x1: px, y1: py, x2: x, y2: y, stroke: falling ? ORANGE : BLUE, 'stroke-width': 4, 'stroke-linecap': 'square' });
            px = x; py = y;
        }
    }
    line(svg, 55, 181, 1839, 181, '#3232dc', 2);
}

// positions: start, end, side
const positionBars = [
    [132, 176, -1], [182, 376, -1], [382, 768, -1], [776, 970, -1], [976, 1170, -1], [1176, 1246, -1],
    [1246, 1370, 1], [1378, 1570, 1]
];

function drawPositions() {
    const svg = document.getElementById('positions');
    positionBars.forEach(([from, to, side]) => {
        add(svg, 'rect', { x: from, y: side > 0 ? 208 : 316, width: to - from, height: side > 0 ? 106 : 104, fill: side > 0 ? BLUE : ORANGE });
    });
    line(svg, 55, 315, 1839, 315, '#3232dc', 2);
    line(svg, 55, 261, 1839, 261, 'rgba(225,72,76,.68)', 2);
}

// price range: x, high, low. One list for each session
const sessions = [
    [56,492,498, 57,482,500, 59,480,492, 63,496,508, 67,486,497, 70,488,497, 73,480,490, 75,470,483, 80,476,485, 84,490,502, 88,497,506,
    91,496,506, 94,483,497, 97,480,488, 101,483,498, 105,486,508, 107,508,528, 109,500,537, 111,527,544, 115,506,527, 119,514,532,
    123,517,533, 125,516,528, 129,524,537, 131,530,594, 133,572,594, 135,580,606, 139,582,602, 145,584,594, 147,570,594, 151,566,573,
    155,571,578, 157,566,576, 161,577,586, 165,582,590, 171,582,590, 173,586,594],
    [181,576,586, 184,584,590, 189,584,594, 194,580,588, 199,574,587, 203,580,587, 207,574,593, 211,580,593, 217,587,610, 222,588,616,
    225,606,624, 229,592,606, 234,598,604, 239,601,610, 245,602,624, 249,608,622, 253,616,636, 257,614,628, 262,616,637, 265,630,646,
    270,622,638, 276,643,654, 282,648,656, 289,640,653, 295,644,657, 299,648,666, 303,644,660, 305,657,680, 307,660,684, 311,648,670,
    313,628,652, 315,632,658, 318,618,640, 321,616,628, 325,622,634, 329,620,632, 333,625,636, 337,630,642, 341,634,646, 345,630,640,
    350,635,642, 354,626,633, 362,626,632, 368,633,638, 373,636,642],
    [381,636,642, 386,640,648, 391,630,641, 396,632,642, 404,624,637, 410,633,644, 415,630,643, 419,643,653, 425,652,660, 431,652,664,
    437,653,666, 442,656,665, 447,662,674, 452,665,674, 460,658,670, 463,670,680, 467,674,682, 469,682,702, 475,690,704, 479,688,697,
    484,692,700, 490,697,710, 495,705,716, 501,700,714, 505,705,722, 511,694,714, 513,692,720, 517,698,728, 523,720,742, 527,722,738,
    529,730,748, 533,735,752, 537,732,748, 541,722,742, 547,718,726, 551,712,718, 559,710,717, 567,714,721, 572,713,722, 575,722,752,
    578,728,742, 581,733,754, 584,716,732, 587,724,740, 591,720,732, 596,729,746, 600,714,730, 605,714,725, 607,725,738, 613,720,734,
    617,714,723, 623,700,714, 628,702,713, 635,708,718, 640,696,710, 645,708,724, 650,706,722, 653,706,717, 657,717,724, 663,715,731,
    669,708,722, 677,713,723, 686,718,725, 690,714,725, 696,730,750, 701,734,745, 703,735,758, 705,757,772, 707,767,812, 709,785,802,
    713,775,797, 715,780,800, 721,768,782, 727,774,782, 733,780,792, 741,780,790, 750,772,780, 758,764,772, 765,770,780],
    [775,774,784, 782,774,783, 787,778,790, 791,773,783, 797,782,796, 803,773,786, 805,760,774, 815,761,770, 820,773,785, 828,780,792,
    834,767,778, 841,762,773, 848,756,773, 851,767,786, 857,767,778, 859,736,772, 861,736,750, 867,740,762, 873,740,753, 880,744,753,
    883,750,770, 890,765,776, 895,753,768, 901,750,760, 905,760,782, 909,767,784, 913,742,760, 917,729,742, 922,742,757, 925,753,766,
    931,750,762, 939,739,748, 945,734,740, 950,742,750, 955,745,757, 967,744,752],
    [975,739,747, 989,741,747, 994,735,742, 1000,729,738, 1007,743,757, 1012,730,743, 1019,737,747, 1029,737,747, 1034,740,756,
    1037,735,749, 1046,748,756, 1051,730,750, 1058,733,742, 1067,729,737, 1077,729,745, 1088,740,753, 1092,732,745, 1097,740,757,
    1099,740,787, 1102,773,795, 1105,785,813, 1107,792,820, 1111,795,810, 1115,796,812, 1119,810,833, 1121,827,842, 1128,820,832,
    1136,813,822, 1142,800,815, 1145,813,827, 1149,820,867, 1152,857,885, 1155,877,898, 1160,877,896, 1163,878,893, 1167,874,880],
    [1175,864,880, 1186,863,870, 1193,844,860, 1199,842,853, 1204,834,851, 1210,824,837, 1215,829,840, 1218,816,832, 1224,820,830,
    1234,814,823, 1239,820,828, 1243,802,813, 1247,800,812, 1251,806,820, 1255,806,817, 1257,788,812, 1261,778,797, 1263,776,787,
    1268,780,792, 1273,790,802, 1277,788,800, 1280,802,812, 1283,812,830, 1287,805,817, 1290,794,805, 1297,786,805, 1301,786,803,
    1305,786,800, 1309,802,817, 1313,817,835, 1320,816,835, 1324,820,832, 1328,828,842, 1335,817,827, 1342,823,832, 1352,822,832,
    1355,828,840, 1362,830,837, 1367,836,842],
    [1377,832,842, 1384,824,833, 1387,835,846, 1394,840,850, 1400,828,840, 1405,835,846, 1409,838,862, 1415,833,847, 1419,820,833,
    1425,830,840, 1431,824,837, 1435,826,837, 1441,812,830, 1448,830,840, 1457,840,852, 1463,840,850, 1468,823,833, 1480,822,832,
    1483,804,827, 1488,810,820, 1492,813,823, 1495,802,814, 1497,722,813, 1499,696,738, 1502,696,723, 1503,674,712, 1507,683,707,
    1509,682,716, 1513,672,703, 1517,690,707, 1521,682,693, 1527,688,702, 1531,697,712, 1534,687,700, 1543,688,698, 1548,683,692,
    1553,685,692, 1555,663,690, 1557,656,668, 1562,657,663, 1567,651,657]
];

function drawSession(svg, s) {
    let k = 0;
    const first = s[0] - 1 + s[0] % 2;
    const last = s[s.length - 3];
    for (let x = first; x <= last; x += 2) {
        while (k + 6 < s.length && s[k + 3] < x) k += 3;
        const f = Math.min(1, Math.max(0, (x - s[k]) / (s[k + 3] - s[k])));
        let top = s[k + 1] + (s[k + 4] - s[k + 1]) * f;
        let low = s[k + 2] + (s[k + 5] - s[k + 2]) * f;
        if (f > 0 && f < 1) {
            top += 4 * noise(x) - 3;
            low -= 4 * noise(x + 7) - 3;
        }
        // a known bar keeps its whole range
        for (let j = 0; j < s.length; j += 3) {
            if (s[j] === x || s[j] === x + 1) {
                top = Math.min(top, s[j + 1]);
                low = Math.max(low, s[j + 2]);
            }
        }
        const move = (s[k + 4] + s[k + 5] - s[k + 1] - s[k + 2]) / (s[k + 3] - s[k]);
        const up = move + (noise(x * 3) - .5) * 5 < 0;
        top = Math.round(top);
        low = Math.round(low);
        add(svg, 'rect', { x: x - 1, y: top, width: 2, height: Math.max(4, low - top), fill: up ? GREEN : RED });
    }
}

function drawPrice() {
    const svg = document.getElementById('price');
    add(svg, 'path', { d: 'M129 571h9v12h4l-9 10-9-10h5z', fill: ORANGE, stroke: '#ffc850' });
    sessions.forEach(s => drawSession(svg, s));
    line(svg, 55, 653, 1839, 653, GREEN, 2);
    line(svg, 535, 727, 1839, 727, '#32b432', 4);
    line(svg, 55, 435, 1839, 435, '#f00', 8);
    line(svg, 55, 459, 1839, 459, '#f00', 4);
    line(svg, 55, 597, 1839, 597, '#f00', 6);
    line(svg, 1544, 701, 1702, 430, '#32b432', 2);
    line(svg, 1498, 679, 1839, 564, '#f00', 2);
    line(svg, 55, 907, 1839, 907, '#32b432', 8);
    add(svg, 'path', { d: 'M1239 829h4v6h3l-5 7-6-7h4z', fill: ORANGE, stroke: '#ffb850' });
    add(svg, 'path', { d: 'M1249 839h4v-7h4l-6-7-6 7h4z', fill: BLUE, stroke: '#8cb0ff' });
    add(svg, 'text', { x: 1241, y: 859, class: 'order-count' }, '2');
}

// ticks: y and colour, marks: plain labels, tags: boxed labels
const scales = {
    equityScale: { from: 49, size: 139,
        ticks: [[57, ORANGE], [101], [181]],
        marks: [[101, '10,'], [176, '10,']],
        tags: [[49, 23, '10,', 'gold wide']] },
    positionsScale: { from: 190, size: 238,
        ticks: [[209, BLUE], [261, '#ddd'], [315], [367], [419]],
        marks: [[314, '0'], [367, '-0.5'], [419, '-1']],
        tags: [[194, 28, '1', 'sky'], [246, 28, '0.5', 'yellow wide']] },
    priceScale: { from: 430, size: 481,
        ticks: [[435, '#f00'], [455], [459, '#f00'], [507], [559], [597, '#f00'], [609], [653, RED], [661], [711], [727, '#32b432'], [763], [815], [865], [907, '#32b432']],
        marks: [[507, '3,4'], [558, '3,4'], [609, '3,3'], [711, '3,3'], [763, '3,3'], [814, '3,3'], [865, '3,2']],
        tags: [[429, 22, 'Wee', 'pink wide'], [449, 22, '1 ho', 'pink wide'], [586, 22, 'Dail', 'pink wide'], [626, 26, '3,3', 'up-tag wide'],
            [650, 27, '3,3', 'down-tag wide'], [717, 22, '1 ho', 'mint wide'], [890, 22, 'Wee', 'mint wide']] }
};

function item(parent, cls, text) {
    const el = document.createElement('span');
    el.className = cls;
    if (text) el.textContent = text;
    parent.appendChild(el);
    return el;
}

function drawScales() {
    for (const id in scales) {
        const box = document.getElementById(id);
        const s = scales[id];
        const at = y => (y - s.from) / s.size * 100 + '%';
        s.ticks.forEach(([y, color]) => {
            const el = item(box, 'tick');
            el.style.top = at(y);
            if (color) el.style.backgroundColor = color;
        });
        s.marks.forEach(([y, text]) => { item(box, 'mark', text).style.top = at(y); });
        s.tags.forEach(([y, height, text, cls]) => {
            const el = item(box, 'tag ' + cls, text);
            el.style.top = at(y);
            el.style.height = height + 'px';
        });
    }
}

const days = [[191, '24'], [393, '25'], [577, '27'], [785, '29'], [985], [1185, '31'], [1387, 'Aug'], [1571, '03'], [1579], [1779, '05']];

function drawTimes() {
    const box = document.getElementById('timeScale');
    const at = x => (x - 55) / 1784 * 100 + '%';
    days.forEach(([x, text]) => {
        item(box, 'notch').style.left = at(x);
        if (text) item(box, 'day', text).style.left = at(x);
    });
    item(box, 'notch bright').style.left = at(975);
}

drawEquity();
drawPositions();
drawPrice();
drawScales();
drawTimes();
```
